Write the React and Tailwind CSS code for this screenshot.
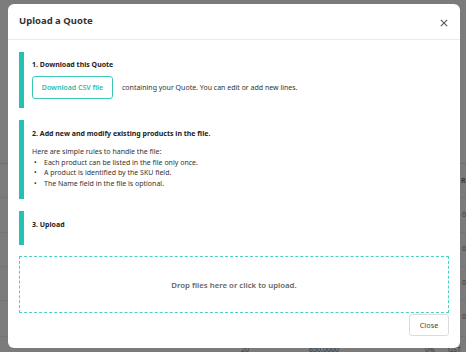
import React from "react";

const font = { fontFamily: "'Noto Sans', 'Open Sans', sans-serif" };

function Section({ children, className }) {
  return (
    <div className={"flex " + (className || "")}>
      <div className="w-[5px] shrink-0 bg-[#22c3b2]" />
      <div className="pl-[8px] flex-1">{children}</div>
    </div>
  );
}

export default function App() {
  return (
    <div className="relative w-[466px] h-[352px] overflow-hidden bg-[#7b7b7b]" style={font}>
      {/* background page under overlay */}
      <div className="absolute inset-0 text-[7px] text-[#3a3a3a]">
        <div className="absolute left-0 right-0 top-[163px] border-t border-[#6e6e6e]" />
        <div className="absolute left-0 right-0 top-[197px] border-t border-[#737373]" />
        <div className="absolute left-0 right-0 top-[232px] border-t border-[#737373]" />
        <div className="absolute left-0 right-0 top-[266px] border-t border-[#737373]" />
        <div className="absolute left-0 right-0 top-[300px] border-t border-[#737373]" />
        <div className="absolute left-0 right-0 top-[336px] border-t border-[#737373]" />
        <div className="absolute left-[461px] top-[176px] font-bold">Ri</div>
        <div className="absolute left-[462px] top-[210px]">0</div>
        <div className="absolute left-[462px] top-[244px]">0</div>
        <div className="absolute left-[462px] top-[278px]">0</div>
        <div className="absolute left-[462px] top-[312px]">0</div>
        <div className="absolute left-[241px] top-[345px]">20</div>
        <div className="absolute left-[309px] top-[345px]">650.0000</div>
        <div className="absolute left-[425px] top-[345px]">0%</div>
        <div className="absolute left-[448px] top-[345px]">GST</div>
      </div>

      {/* modal */}
      <div className="absolute left-[8px] top-[4px] w-[452px] h-[344px] bg-white rounded-[6px] flex flex-col">
        <div className="h-[36px] shrink-0 flex items-center justify-between pl-[11px] pr-[12px] border-b border-[#ebebeb]">
          <span className="text-[9.5px] font-bold text-[#333]">Upload a Quote</span>
          <svg width="8" height="8" viewBox="0 0 8 8" className="mt-[2px]">
            <path d="M0.8 0.8L7.2 7.2M7.2 0.8L0.8 7.2" stroke="#555" strokeWidth="1.1" />
          </svg>
        </div>

        <div className="flex flex-col px-[11px] pt-[12px] text-[7px] leading-[10px] text-[#333]">
          <Section className="h-[56px]">
            <div className="pt-[8px] font-bold text-[#222]">1. Download this Quote</div>
            <div className="mt-[6px] flex items-center">
              <div className="w-[81px] h-[23px] border border-[#3cc9b9] rounded-[3px] flex items-center justify-center font-semibold text-[#2cbcad]">
                Download CSV file
              </div>
              <span className="ml-[9px]">containing your Quote. You can edit or add new lines.</span>
            </div>
          </Section>

          <Section className="mt-[12px] h-[79px]">
            <div className="pt-[9px] font-bold text-[#222]">2. Add new and modify existing products in the file.</div>
            <div className="mt-[8px] leading-[10.5px]">
              <div>Here are simple rules to handle the file:</div>
              <div className="flex"><span className="w-[12px] pl-[2px]">•</span><span>Each product can be listed in the file only once.</span></div>
              <div className="flex"><span className="w-[12px] pl-[2px]">•</span><span>A product is identified by the SKU field.</span></div>
              <div className="flex"><span className="w-[12px] pl-[2px]">•</span><span>The Name field in the file is optional.</span></div>
            </div>
          </Section>

          <Section className="mt-[12px] h-[34px]">
            <div className="pt-[9px] font-bold text-[#222]">3. Upload</div>
          </Section>

          <div className="mt-[11px] h-[57px] border border-dashed border-[#4ccfc0] flex items-center justify-center text-[7.8px] font-semibold text-[#666]">
            Drop files here or click to upload.
          </div>

          <div className="flex justify-end mt-[1px]">
            <div className="w-[40px] h-[22px] border border-[#dcdcdc] rounded-[3px] flex items-center justify-center text-[7.3px] text-[#444]">
              Close
            </div>
          </div>
        </div>
      </div>
    </div>
  );
}
